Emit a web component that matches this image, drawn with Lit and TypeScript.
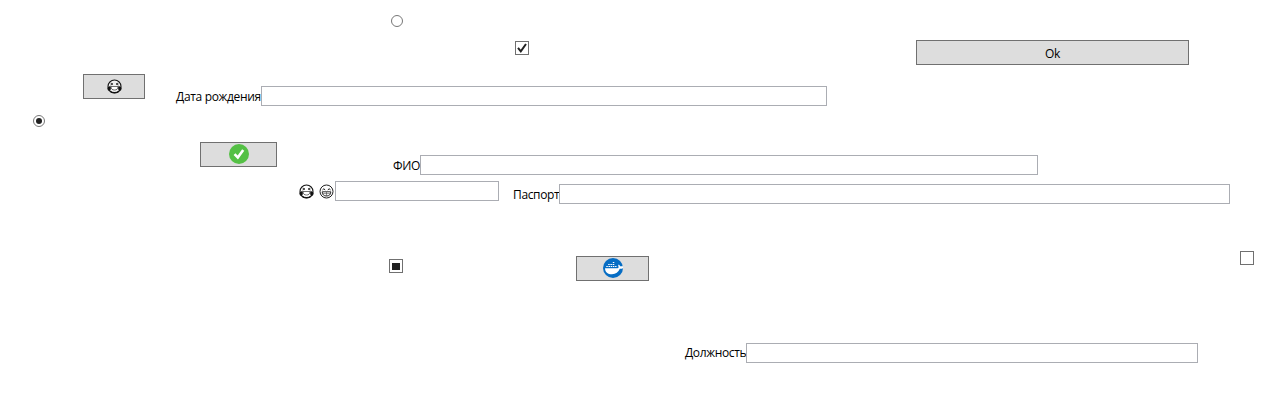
import { LitElement, html, css } from "lit";
import { customElement } from "lit/decorators.js";

const joy = html`<svg class="face" viewBox="0 0 15 15" width="15" height="15">
  <circle cx="7.5" cy="7.5" r="6.5" fill="#fff" fill-opacity=".55" stroke="#111" stroke-width="1.1"/>
  <path d="M3.500 4 6 5 3.500 6M11.500 4 9 5 11.500 6" fill="none" stroke="#222" stroke-width=".9"/>
  <path d="M4 7.500h7c0 2.500-1.400 3.500-3.500 3.500S4 10 4 7.500z" fill="#fff" stroke="#333" stroke-width=".7"/>
  <path d="M.4 9C.8 7.800 2 7.300 3.700 7.300c.2 2 .3 3.700-.8 4.700C1.400 12.300.4 11 .4 9zM14.600 9C14.200 7.800 13 7.300 11.300 7.300c-.2 2-.3 3.700.8 4.700 1.500.3 2.500-1 2.500-3z" fill="#111"/>
  <path d="M3 12.200C5.200 14.200 9.800 14.200 12 12.200" fill="none" stroke="#111" stroke-width="1.300"/>
</svg>`;

const grin = html`<svg class="face" viewBox="0 0 15 15" width="15" height="15">
  <circle cx="7.5" cy="7.5" r="6.5" fill="#fff" stroke="#222" stroke-width="1"/>
  <path d="M3.500 5.900Q4.800 3.700 6.200 5.900M8.800 5.900Q10.200 3.700 11.500 5.900" fill="none" stroke="#111" stroke-width="1"/>
  <path d="M3.200 7.800h8.600c0 2.900-1.700 4.200-4.300 4.200s-4.300-1.300-4.300-4.200z" fill="#fff" stroke="#111" stroke-width=".9"/>
  <path d="M3.500 9.600h8M7.500 8v4" stroke="#444" stroke-width=".6"/>
</svg>`;

const done = html`<svg viewBox="0 0 20 20" width="20" height="20">
  <circle cx="10" cy="10" r="10" fill="#54c045"/>
  <path d="M5.500 10.200 8.800 13.500 14.200 6" fill="none" stroke="#fff" stroke-width="2.600"/>
</svg>`;

const whale = html`<svg viewBox="0 0 20 20" width="20" height="20">
  <circle cx="10" cy="10" r="10" fill="#066dc4"/>
  <path d="M2 10.200H14.500c.9 0 1.200-.6 1.100-1.400-.6-.9-.5-1.600.2-2.300.8.500 1.100 1.200 1.200 1.800h3v1.900c-.6.500-1.700.6-3.200.6-1.400 3.500-4 5.400-7.800 5.400-4.200 0-6.800-1.900-7-6z" fill="#fff"/>
  <path d="M3.300 8.500h10.200M5.200 6.500h6.800M9.800 4.500h2" fill="none" stroke="#fff" stroke-width="1" stroke-dasharray="1.500 .7"/>
</svg>`;

@customElement("app-root")
export class AppRoot extends LitElement {
  static styles = css`
    :host {
      display: block;
      width: 1273px;
      height: 404px;
      overflow: hidden;
      background: #fff;
      color: #000;
      font: 12px/16px "Open Sans", "Noto Sans", sans-serif;
    }
    * { box-sizing: border-box; }
    .form { display: flex; flex-direction: column; }
    .row { display: flex; align-items: flex-start; }
    svg { display: block; flex: none; }
    .btn {
      display: flex; align-items: center; justify-content: center;
      flex: none; height: 25px; padding: 0; border: 1px solid #707070;
      background: #ddd; font: inherit; color: inherit;
    }
    .badge { padding-bottom: 2px; }
    .radio {
      flex: none; display: grid; place-items: center; width: 12px; height: 12px;
      border: 1px solid #777; border-radius: 50%; background: #fff;
    }
    .dot { width: 6px; height: 6px; border-radius: 50%; background: #212121; }
    .check {
      flex: none; display: grid; place-items: center; width: 14px; height: 14px;
      border: 1px solid #707070; background: #fff;
    }
    .fill { width: 8px; height: 7px; background: #212121; }
    .label { flex: none; white-space: nowrap; letter-spacing: -.36px; }
    .box { flex: none; height: 20px; border: 1px solid #abadb3; background: #fff; }

    .r1 { height: 40px; padding: 15px 0 0 391px; }
    .r2 { height: 34px; padding-left: 515px; }
    .r2 .check { margin-top: 1px; }
    .r2 .btn { width: 273px; margin-left: 387px; padding-top: 2px; letter-spacing: -.2px; }
    .r3 { height: 41px; padding-left: 83px; }
    .r3 .btn { width: 62px; }
    .r3 .label { width: 85px; margin: 15px 0 0 31px; letter-spacing: -.33px; }
    .r3 .box { width: 566px; margin-top: 12px; }
    .r4 { height: 27px; padding-left: 33px; }
    .r5 { height: 39px; padding-left: 200px; }
    .r5 .btn { width: 77px; }
    .r5 .label { width: 27px; margin: 16px 0 0 116px; }
    .r5 .box { width: 618px; margin-top: 13px; }
    .r6 { height: 70px; padding-left: 299px; }
    .r6 .face { margin: 3px 5px 0 0; }
    .r6 .face + .face { margin-right: 1px; }
    .r6 .first { width: 164px; }
    .r6 .label { width: 46px; margin: 6px 0 0 14px; }
    .r6 .last { width: 671px; margin-top: 3px; }
    .r7 { height: 92px; padding-left: 389px; }
    .r7 .mid { margin-top: 8px; }
    .r7 .btn { width: 73px; margin: 5px 591px 0 173px; }
    .r8 { padding-left: 685px; }
    .r8 .label { width: 61px; margin-top: 2px; }
    .r8 .box { width: 452px; }
  `;

  render() {
    return html`<div class="form">
      <div class="row r1"><span class="radio"></span></div>
      <div class="row r2">
        <span class="check"><svg viewBox="0 0 12 12" width="12" height="12"><path d="M2 5.800 4.800 9.300 10 2" fill="none" stroke="#212121" stroke-width="2"/></svg></span>
        <button class="btn">Ok</button>
      </div>
      <div class="row r3">
        <button class="btn">${joy}</button>
        <span class="label">Дата рождения</span><span class="box"></span>
      </div>
      <div class="row r4"><span class="radio"><span class="dot"></span></span></div>
      <div class="row r5">
        <button class="btn badge">${done}</button>
        <span class="label">ФИО</span><span class="box"></span>
      </div>
      <div class="row r6">
        ${joy}${grin}<span class="box first"></span>
        <span class="label">Паспорт</span><span class="box last"></span>
      </div>
      <div class="row r7">
        <span class="check mid"><span class="fill"></span></span>
        <button class="btn badge">${whale}</button>
        <span class="check"></span>
      </div>
      <div class="row r8"><span class="label">Должность</span><span class="box"></span></div>
    </div>`;
  }
}
